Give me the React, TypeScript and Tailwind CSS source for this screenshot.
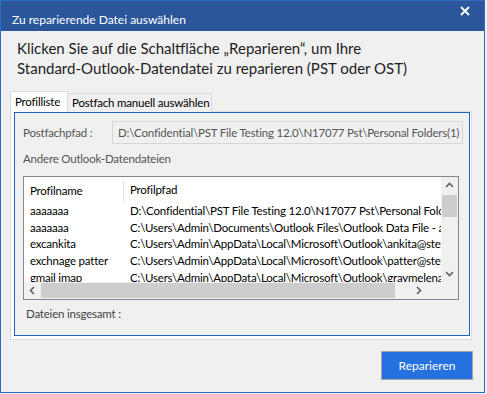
import React from "react";

const F = { fontFamily: 'Lato, "Noto Sans", sans-serif' };

const rows: [string, string][] = [
  ["aaaaaaa", "D:\\Confidential\\PST File Testing 12.0\\N17077 Pst\\Personal Folders(1).pst"],
  ["aaaaaaa", "C:\\Users\\Admin\\Documents\\Outlook Files\\Outlook Data File - aaaaaaa.pst"],
  ["excankita", "C:\\Users\\Admin\\AppData\\Local\\Microsoft\\Outlook\\ankita@stellarinfo.com.ost"],
  ["exchnage patter", "C:\\Users\\Admin\\AppData\\Local\\Microsoft\\Outlook\\patter@stellarinfo.com.ost"],
  ["gmail imap", "C:\\Users\\Admin\\AppData\\Local\\Microsoft\\Outlook\\graymelena73@gmail.com.ost"],
];

function Chevron({ dir }: { dir: "up" | "down" | "left" | "right" }) {
  const d =
    dir === "up"
      ? "M1 6 L4.5 2.5 L8 6"
      : dir === "down"
      ? "M1 3 L4.5 6.5 L8 3"
      : dir === "left"
      ? "M6 1 L2.5 4.5 L6 8"
      : "M3 1 L6.5 4.5 L3 8";
  return (
    <svg width="9" height="9" viewBox="0 0 9 9">
      <path d={d} fill="none" stroke="#606060" strokeWidth="1.6" />
    </svg>
  );
}

export default function App() {
  return (
    <div className="w-[487px] h-[394px] bg-[#f0f0f0] text-[11.5px] tracking-[-0.2px]" style={F}>
      <div className="w-[485px] h-[393px] border border-[#2b6cc4] flex flex-col bg-[#f0f0f0]">
        {/* title bar */}
        <div className="h-[30px] bg-[#2b579a] flex items-start justify-between text-white">
          <div className="pl-[11px] pt-[11px] leading-[16px] text-[12px] tracking-normal whitespace-nowrap">Zu reparierende Datei auswählen</div>
          <div className="pr-[14px] pt-[5px]">
            <svg width="10" height="10" viewBox="0 0 10 10">
              <path d="M1 1 L9 9 M9 1 L1 9" stroke="white" strokeWidth="1.8" />
            </svg>
          </div>
        </div>
        {/* instruction */}
        <div className="mt-[7px] pl-[16px] text-[15px] tracking-normal leading-[20px] text-[#1e1e1e] whitespace-nowrap">
          <div>Klicken Sie auf die Schaltfläche „Reparieren“, um Ihre</div>
          <div>Standard-Outlook-Datendatei zu reparieren (PST oder OST)</div>
        </div>
        {/* tabs */}
        <div className="mt-[13px] ml-[9px] flex flex-col w-[462px]">
          <div className="flex items-end h-[21px] relative z-10 whitespace-nowrap">
            <div className="h-[21px] w-[58px] bg-white border border-b-0 border-[#d9d9d9] pl-[4px] leading-[19px] text-black">
              Profilliste
            </div>
            <div className="h-[19px] w-[144px] bg-[#f0f0f0] border border-l-0 border-b-0 border-[#d9d9d9] pl-[4px] leading-[18px] text-black">
              Postfach manuell auswählen
            </div>
          </div>
          <div className="h-[229px] border border-[#dcdcdc] bg-white pl-[3px] pr-[1px] pb-[3px] -mt-[1px]">
            <div className="h-full border border-[#1e62c8] bg-[#f0f0f0] flex flex-col pl-[8px] pt-[8px] text-[#555]">
              <div className="flex items-center h-[23px]">
                <div className="w-[89px] whitespace-nowrap">Postfachpfad :</div>
                <div className="w-[351px] h-[23px] border border-[#d6d6d6] bg-[#f0f0f0] pl-[5px] leading-[21px] overflow-hidden whitespace-nowrap text-[#555]">
                  D:\Confidential\PST File Testing 12.0\N17077 Pst\Personal Folders(1) Recovered.pst
                </div>
              </div>
              <div className="mt-[6px] h-[17px] leading-[17px] whitespace-nowrap">Andere Outlook-Datendateien</div>
              <div className="mt-[9px] w-[436px] h-[124px] border border-[#828790] bg-white grid grid-cols-[1fr_17px] grid-rows-[1fr_17px] text-black">
                <div className="overflow-hidden">
                  <div className="flex h-[26px] items-center whitespace-nowrap">
                    <div className="w-[100px] pl-[6px] h-[23px] leading-[23px] border-r border-[#e5e5e5]">Profilname</div>
                    <div className="pl-[6px]">Profilpfad</div>
                  </div>
                  {rows.map(([n, p], i) => (
                    <div key={i} className="flex h-[16.67px] leading-[16.67px] whitespace-nowrap">
                      <div className="w-[100px] pl-[6px] shrink-0">{n}</div>
                      <div className="pl-[6px]">{p}</div>
                    </div>
                  ))}
                </div>
                <div className="bg-[#f0f0f0] flex flex-col items-center">
                  <div className="h-[17px] flex items-center justify-center"><Chevron dir="up" /></div>
                  <div className="mt-[1px] w-[15px] h-[22px] bg-[#cdcdcd]" />
                  <div className="flex-1" />
                  <div className="h-[17px] flex items-center justify-center"><Chevron dir="down" /></div>
                </div>
                <div className="bg-[#f0f0f0] flex items-center">
                  <div className="w-[17px] h-[17px] flex items-center justify-center"><Chevron dir="left" /></div>
                  <div className="w-[354px] h-[15px] bg-[#cdcdcd]" />
                  <div className="flex-1 h-[17px] flex items-center justify-center"><Chevron dir="right" /></div>
                </div>
                <div className="bg-[#f0f0f0]" />
              </div>
              <div className="mt-[5px] pl-[3px] h-[17px] leading-[17px] text-[#444] whitespace-nowrap">Dateien insgesamt :</div>
            </div>
          </div>
        </div>
        {/* button */}
        <div className="flex justify-end mt-[11px] pr-[11px]">
          <button className="w-[92px] h-[29px] bg-[#2571dd] border border-[#a6a6a6] text-white text-[12px] tracking-normal">
            Reparieren
          </button>
        </div>
      </div>
    </div>
  );
}
